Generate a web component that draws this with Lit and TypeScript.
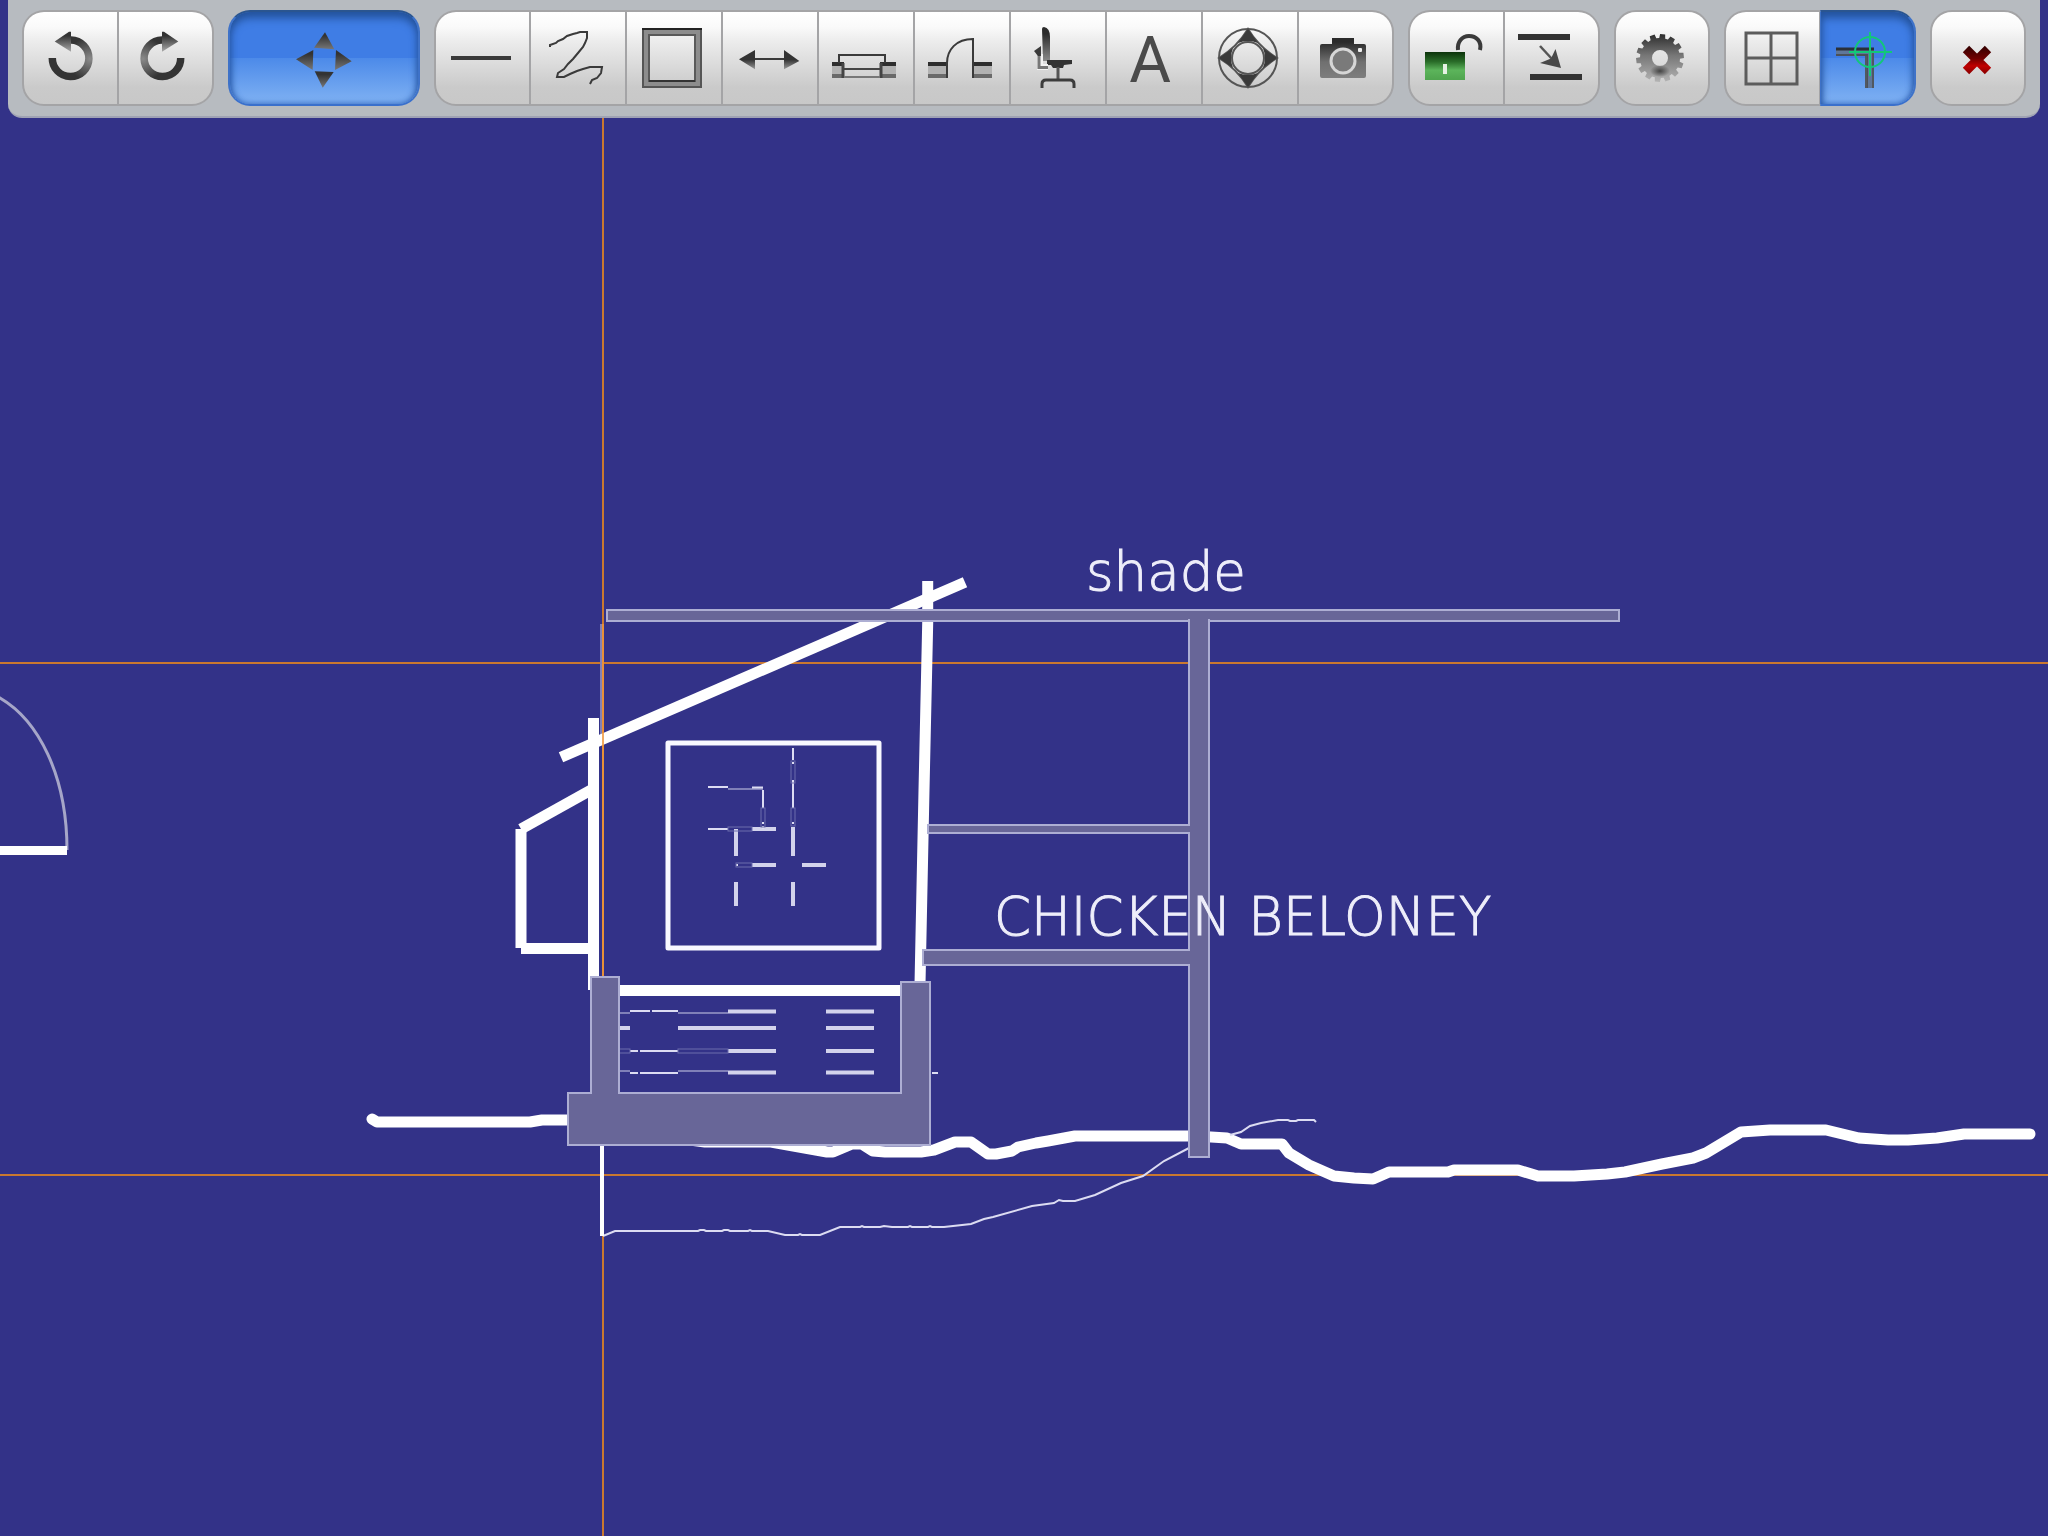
import { LitElement, html, css, svg, SVGTemplateResult } from "lit";
import { customElement, state } from "lit/decorators.js";
import { classMap } from "lit/directives/class-map.js";

interface Tool {
  id: string;
  label: string;
  icon: SVGTemplateResult;
  wide?: boolean;
}

const INK = "#3a3a3a";

/** Outline of a cog wheel centred on (cx, cy). */
function cog(cx: number, cy: number, teeth: number, outer: number, inner: number): string {
  const points: string[] = [];
  const step = (Math.PI * 2) / teeth;
  for (let i = 0; i < teeth; i++) {
    const a = i * step - Math.PI / 2 + step / 4;
    for (const [offset, r] of [[-0.34, inner], [-0.24, outer], [0.24, outer], [0.34, inner]]) {
      const t = a + offset * step;
      points.push(`${(cx + Math.cos(t) * r).toFixed(1)} ${(cy + Math.sin(t) * r).toFixed(1)}`);
    }
  }
  return `M${points.join("L")}Z`;
}

const turnArrow = (id: string) => svg`
  <defs>
    <radialGradient id=${id + "-ring"} gradientUnits="userSpaceOnUse" cx="67" cy="49" r="22">
      <stop offset="0" stop-color="#8a8a8a" /><stop offset="1" stop-color="#343434" />
    </radialGradient>
    <linearGradient id=${id + "-tip"} x1="0" y1="0" x2="0" y2="1">
      <stop offset="0.2" stop-color="#333" /><stop offset="1" stop-color="#aaa" />
    </linearGradient>
  </defs>
  <path d="M46 30H48A18.3 18.3 0 1 1 29.3 48" fill="none" stroke="url(#${id}-ring)" stroke-width="7.5" />
  <path d="M31.7 31.5L46 21.7H48V41.7Z" fill="url(#${id}-tip)" />`;

const block = (x: number, w: number) => svg`
  <rect x=${x} y="52" width=${w} height="16" fill="#b2b2b2" />
  <rect x=${x} y="52" width=${w} height="4" fill="#2e2e2e" />
  <rect x=${x} y="64" width=${w} height="4" fill="#6a6a6a" />`;

const ICONS: Record<string, SVGTemplateResult> = {
  undo: turnArrow("undo"),
  redo: svg`<g transform="translate(92 0) scale(-1 1)">${turnArrow("redo")}</g>`,
  move: svg`
    <defs><linearGradient id="mv" x1="0" y1="0" x2="0" y2="1">
      <stop offset="0.2" stop-color="#333" /><stop offset="1" stop-color="#777" />
    </linearGradient></defs>
    <g fill="url(#mv)">
      <path d="M49 22.3L38 37.7L58.3 39.3Z" />
      <path d="M60 40L75.7 51.3L59 60Z" />
      <path d="M37.3 40L20 49.3L36.7 60Z" />
      <path d="M38.7 61.3L57.7 62L46.7 77.7Z" />
    </g>`,
  line: svg`<rect x="16" y="46" width="60" height="4" fill=${INK} />`,
  sketch: svg`<path d="M20 37V35L26 33L28 31L33 29L37 26L43 24L47 23L50 22H57V28L55 33L53 37L48 43L43 49L38 54L34 59L28 63L27 67H34L40 64L47 61L53 59L60 57H72L71 63L67 68L62 70L60 74" fill="none" stroke=${INK} stroke-width="2" />`,
  room: svg`
    <path fill="#8d8d8d" fill-rule="evenodd" d="M16 18H76V78H16ZM23 25V71H69V25Z" />
    <rect x="17" y="19" width="58" height="58" fill="none" stroke="#555" stroke-width="2" />
    <rect x="23" y="25" width="46" height="46" fill="none" stroke="#5a5a5a" stroke-width="2" />
    <path d="M16 19H76" stroke="#222" stroke-width="2" />
    <path d="M23 71H69" stroke="#333" stroke-width="2" />`,
  measure: svg`
    <defs><linearGradient id="ms" x1="0" y1="0" x2="0" y2="1">
      <stop offset="0.5" stop-color="#333" /><stop offset="1" stop-color="#999" />
    </linearGradient></defs>
    <path d="M32 49H63" stroke=${INK} stroke-width="2" />
    <path d="M17 49.3L33 40V59.3ZM62 40V59.3L77.3 51Z" fill="url(#ms)" />`,
  window: svg`
    ${block(14, 12)}${block(62, 16)}
    <path d="M21 53V45H67V53" fill="none" stroke=${INK} stroke-width="2" />
    <path d="M25 53V68M63 53V68" stroke="#444" stroke-width="3" />
    <path d="M26 59H62" stroke="#444" stroke-width="2" />
    <path d="M26 67H62" stroke="#777" stroke-width="2" />`,
  door: svg`
    ${block(14, 20)}${block(58, 20)}
    <path d="M33 68V53C33 40 42 29 59 29V68" fill="none" stroke=${INK} stroke-width="2" />`,
  furniture: svg`
    <defs><linearGradient id="ch" x1="0" y1="0" x2="0" y2="1">
      <stop offset="0.2" stop-color="#2c2c2c" /><stop offset="1" stop-color="#8a8a8a" />
    </linearGradient></defs>
    <path d="M32 19Q32 17 34 17Q40 18 40 27V51H33Z" fill="url(#ch)" />
    <path d="M37 50H62V54L54 55L53 58H43L41 55H37Z" fill="#333" />
    <path d="M48 57V70" stroke="#555" stroke-width="3" />
    <path d="M32 78V74Q32 70 36 70H60Q64 70 64 74V78" fill="none" stroke="#3c3c3c" stroke-width="3" />
    <path d="M30 44V57H38" fill="none" stroke="#f2f2f2" stroke-width="6" />
    <path d="M29 44V57.500H38" fill="none" stroke="#777" stroke-width="3" />
    <path d="M24 41L31 36V46H28Z" fill="#3a3a3a" />`,
  text: svg`<text class="glyph" x="44" y="72" text-anchor="middle">A</text>`,
  orbit: svg`
    <g fill="none" stroke="#555" stroke-width="2">
      <circle cx="46" cy="48" r="29" /><circle cx="46" cy="48" r="16" />
      <path d="M46 19Q57 37 75 48Q57 59 46 77Q35 59 17 48Q35 37 46 19Z" />
    </g>
    <g fill=${INK}>
      <path d="M46 19L56 33Q46 29 36 33Z" /><path d="M46 77L56 63Q46 67 36 63Z" />
      <path d="M17 48L31 38Q27 48 31 58Z" /><path d="M75 48L61 38Q65 48 61 58Z" />
    </g>`,
  camera: svg`
    <defs><linearGradient id="cam" x1="0" y1="0" x2="0" y2="1">
      <stop offset="0.1" stop-color="#2a2a2a" /><stop offset="0.6" stop-color="#707070" /><stop offset="1" stop-color="#7e7e7e" />
    </linearGradient></defs>
    <path d="M34 28H56V34H66Q68 34 68 36V66Q68 68 66 68H24Q22 68 22 66V36Q22 34 24 34H34Z" fill="url(#cam)" />
    <circle cx="45" cy="51" r="12" fill="#7a7a7a" stroke="#d6d6d6" stroke-width="3" />
    <rect x="60" y="38" width="4" height="4" rx="1" fill="#eee" />`,
  lock: svg`
    <defs><linearGradient id="lk" x1="0" y1="0" x2="0" y2="1">
      <stop offset="0" stop-color="#0c330b" /><stop offset="0.35" stop-color="#2a6d29" /><stop offset="0.65" stop-color="#5cb45b" /><stop offset="1" stop-color="#4fa44e" />
    </linearGradient></defs>
    <path d="M49 40C48 32 53 26 60 26S73 31 71 40" fill="none" stroke=${INK} stroke-width="4" />
    <rect x="16" y="42" width="40" height="28" fill="url(#lk)" />
    <rect x="34" y="54" width="4" height="10" fill="#e6f2e4" />`,
  align: svg`
    <rect x="14" y="24" width="52" height="6" fill="#333" /><rect x="26" y="64" width="52" height="6" fill="#333" />
    <path d="M36 36L48 49" stroke="#555" stroke-width="2.500" />
    <path d="M57 58L51.500 39L47 48.500L36 53Z" fill="#484848" />`,
  settings: svg`
    <defs>
      <linearGradient id="gr" x1="0" y1="0" x2="0" y2="1">
        <stop offset="0" stop-color="#2c2c2c" /><stop offset="0.45" stop-color="#777" /><stop offset="1" stop-color="#b4b4b4" />
      </linearGradient>
      <radialGradient id="gs"><stop offset="0.1" stop-color="#4c4c4c" /><stop offset="1" stop-color="#4c4c4c" stop-opacity="0" /></radialGradient>
    </defs>
    <path d=${cog(46, 48, 14, 24, 20) + "M54 48A8 8 0 1 0 38 48A8 8 0 1 0 54 48Z"} fill="url(#gr)" fill-rule="evenodd" />
    <ellipse cx="46" cy="61" rx="10" ry="6" fill="url(#gs)" />`,
  grid: svg`<path d="M21 23H72V74H21ZM46 23V74M21 48H72" fill="none" stroke="#5c5c5c" stroke-width="3" />`,
  snap: svg`
    <path d="M16 39H53V78M16 45H47V78" fill="none" stroke="#4b5158" stroke-width="2" />
    <path d="M16 42H50V78" fill="none" stroke="#5f7699" stroke-width="4" />
    <path d="M16 39H54" stroke="#2b3038" stroke-width="3" />
    <path d="M46 46V78M53 40V78" stroke="#525860" stroke-width="2" />
    <g fill="none" stroke="#12c878" stroke-width="2">
      <circle cx="50" cy="42" r="15" /><path d="M29 42H72M50 22V66" />
    </g>`,
  close: svg`
    <defs><linearGradient id="cl" gradientUnits="userSpaceOnUse" x1="0" y1="35" x2="0" y2="65">
      <stop offset="0" stop-color="#2c0000" /><stop offset="0.45" stop-color="#700000" /><stop offset="0.7" stop-color="#c00000" /><stop offset="1" stop-color="#800000" />
    </linearGradient></defs>
    <path d="M36 39L58 61M58 39L36 61" stroke="url(#cl)" stroke-width="9" />`,
};

const GROUPS: Tool[][] = [
  [
    { id: "undo", label: "Undo", icon: ICONS.undo },
    { id: "redo", label: "Redo", icon: ICONS.redo },
  ],
  [{ id: "move", label: "Move", icon: ICONS.move, wide: true }],
  [
    { id: "line", label: "Line", icon: ICONS.line },
    { id: "sketch", label: "Freehand", icon: ICONS.sketch },
    { id: "room", label: "Room", icon: ICONS.room },
    { id: "measure", label: "Dimension", icon: ICONS.measure },
    { id: "window", label: "Window", icon: ICONS.window },
    { id: "door", label: "Door", icon: ICONS.door },
    { id: "furniture", label: "Furniture", icon: ICONS.furniture },
    { id: "text", label: "Text", icon: ICONS.text },
    { id: "orbit", label: "Pan", icon: ICONS.orbit },
    { id: "camera", label: "Photo", icon: ICONS.camera },
  ],
  [
    { id: "lock", label: "Unlock", icon: ICONS.lock },
    { id: "align", label: "Offset", icon: ICONS.align },
  ],
  [{ id: "settings", label: "Settings", icon: ICONS.settings }],
  [
    { id: "grid", label: "Grid", icon: ICONS.grid },
    { id: "snap", label: "Snap", icon: ICONS.snap },
  ],
  [{ id: "close", label: "Close", icon: ICONS.close }],
];

@customElement("tool-bar")
export class ToolBar extends LitElement {
  @state() private active = new Set(["move", "snap"]);

  static styles = css`
    :host {
      display: flex;
      gap: 14px;
      box-sizing: border-box;
      margin: 0 8px;
      padding: 10px 14px;
      background: #b7bbc0;
      border-bottom: 2px solid #9fa2b4;
      border-radius: 0 0 14px 14px;
    }
    .group {
      display: grid;
      grid-auto-flow: column;
      grid-auto-columns: minmax(0, 1fr);
      min-width: 0;
      flex: 1 1 0;
    }
    .g2 { flex-grow: 2; }
    .g10 { flex-grow: 10; }
    .tool {
      display: flex;
      justify-content: center;
      align-items: center;
      box-sizing: border-box;
      min-width: 0;
      height: 96px;
      margin: 0;
      padding: 0;
      border: 1px solid #a4a4a6;
      border-width: 2px 1px;
      background: linear-gradient(#fff, #fafafa 16%, #ececec 32%, #cacaca 82%, #c8c8c8);
      cursor: pointer;
    }
    .tool:first-child { border-left-width: 2px; border-top-left-radius: 22px; border-bottom-left-radius: 22px; }
    .tool:last-child { border-right-width: 2px; border-top-right-radius: 22px; border-bottom-right-radius: 22px; }
    .active {
      border-color: #2a5590 #3e72c8 #3a70cc;
      background: linear-gradient(#3f7de5 0 50%, #4c8ae9 50%, #80b2f3);
      box-shadow: inset 0 6px 8px #24539c, inset 0 0 6px #2f64bd;
    }
    .icon { flex: none; width: 96px; height: 96px; display: block; }
    .glyph { font: 64px Roboto, "Liberation Sans", sans-serif; fill: #4a4a4a; }
  `;

  private toggle(id: string) {
    const next = new Set(this.active);
    next.has(id) ? next.delete(id) : next.add(id);
    this.active = next;
  }

  render() {
    return GROUPS.map((group) => {
      const units = group.reduce((n, t) => n + (t.wide ? 2 : 1), 0);
      return html`<div class=${classMap({ group: true, g2: units === 2, g10: units === 10 })}>
        ${group.map(
          (t) => html`<button
            type="button"
            class=${classMap({ tool: true, active: this.active.has(t.id) })}
            aria-label=${t.label}
            aria-pressed=${this.active.has(t.id)}
            @click=${() => this.toggle(t.id)}
          ><svg class="icon" viewBox="0 0 96 96" aria-hidden="true">${t.icon}</svg></button>`
        )}
      </div>`;
    });
  }
}

/** Strokes of the plan details: [x1, y1, x2, y2]. */
const THICK = [
  [793, 827, 793, 856], [793, 882, 793, 906], [736, 829, 736, 856], [736, 882, 736, 906],
  [752, 829, 776, 829], [752, 865, 776, 865], [802, 865, 826, 865],
  [728, 1011.5, 776, 1011.5], [826, 1011.5, 874, 1011.5],
  [619, 1028, 630, 1028], [678, 1028, 776, 1028], [826, 1028, 874, 1028],
  [728, 1051, 776, 1051], [826, 1051, 874, 1051],
  [728, 1072.5, 776, 1072.5], [826, 1072.5, 874, 1072.5],
];
const THIN = [
  [793, 748, 793, 760], [793, 780, 793, 808], [793, 762, 793, 764], [793, 822, 793, 824],
  [708, 787, 728, 787], [752, 787.5, 763, 787.5], [763, 790, 763, 808], [763, 822, 763, 824], [763, 826, 763, 829],
  [708, 829, 728, 829], [736, 865, 738, 865],
  [630, 1011, 650, 1011], [652, 1011, 678, 1011],
  [630, 1051, 638, 1051], [640, 1051, 678, 1051],
  [630, 1073, 638, 1073], [640, 1073, 678, 1073], [932, 1073, 938, 1073],
];
const FAINT = [
  [728, 789, 763, 789], [619, 1013, 630, 1013], [678, 1013, 728, 1013],
  [619, 1071, 630, 1071], [678, 1071, 728, 1071],
];
/** Hollow openings: [x, y, width, height]. */
const HOLLOW = [
  [791, 761, 4, 22], [791, 808, 4, 18], [761, 808, 4, 19], [728, 827, 24, 4], [736, 863, 16, 4],
  [615, 1049, 15, 4], [678, 1049, 50, 4],
];
const seg = (rows: number[][]) => rows.map(([a, b, c, d]) => `M${a} ${b}L${c} ${d}`).join("");

@customElement("plan-canvas")
export class PlanCanvas extends LitElement {
  static styles = css`
    :host { display: block; overflow: hidden; background: #333288; }
    .plan { display: block; width: 100%; height: 100%; }
    .guide { stroke: #ca7830; stroke-width: 2; fill: none; }
    .guide-top { stroke: #f0963a; stroke-width: 2; fill: none; }
    .stroke { stroke: #fff; stroke-width: 11; fill: none; }
    .ground { stroke: #fff; stroke-width: 11; stroke-linejoin: round; stroke-linecap: round; fill: none; }
    .pane { stroke: #f8f8ff; stroke-width: 5; fill: none; stroke-linejoin: round; }
    .thick { stroke: #d3d3ec; stroke-width: 4; fill: none; }
    .thin { stroke: #dcdcf2; stroke-width: 2; fill: none; }
    .faint { stroke: #8080b8; stroke-width: 2; fill: none; }
    .hollow { stroke: #6c6cac; stroke-width: 1; fill: none; }
    .wall { fill: #686698; stroke: #adaed3; stroke-width: 2; }
    .core { fill: #686698; }
    .note {
      font: 200 53px "DejaVu Sans", "DejaVu Sans Light", sans-serif;
      fill: #eeeefa;
      stroke: #eeeefa;
      stroke-width: 1;
    }
  `;

  render() {
    return html`<svg class="plan" viewBox="0 0 2048 1536" preserveAspectRatio="xMinYMin slice" role="img" aria-label="Section drawing">
      <path class="guide" d="M0 663H2048M0 1175H2048M603 0V1536" />

      <path d="M-8 694L0 698C38 720 67 775 67 850" fill="none" stroke="#a6a6c8" stroke-width="3" />
      <rect x="0" y="846" width="67" height="9" fill="#fff" />

      <path class="faint" d="M601 624V735" />
      <path class="stroke" d="M561 757.300L965 582.300" />
      <path class="stroke" d="M593.500 718V990" />
      <path class="stroke" d="M591 790L521 829" />
      <path class="stroke" d="M521 829V948M521 948.500H594" />
      <path class="stroke" d="M927.700 581V623L924 790L920 984" />
      <path class="guide-top" d="M603 624V976" stroke-opacity="0.8" />
      <path class="stroke" d="M619 990.500H901" />

      <path class="ground" d="M372 1119L377 1122H530L542 1120H572" />
      <path class="ground" d="M690 1140L705 1142H771L827 1152H833L852 1144H862L873 1151L885 1152H921L934 1150L955 1142H971L988 1154H996L1012 1151L1018 1147L1036 1143L1048 1141L1075 1136H1188L1211 1137L1227 1138L1241 1144H1282L1289 1153L1309 1165L1334 1176L1354 1178L1373 1179L1389 1172H1448L1454 1170H1518L1538 1176H1574L1607 1174L1625 1172L1662 1164L1693 1158L1706 1153L1741 1132L1770 1130H1826L1859 1138L1888 1140L1908 1140L1937 1138L1964 1134H2030" />

      <path class="thin" d="M603 1236L615 1231H698L700 1230H704L706 1231H722L724 1230H728L730 1231H748L750 1230L752 1231H768L785 1235H798L800 1234L802 1235H820L840 1227H860L862 1226L864 1227H880L884 1226L892 1227H908L910 1226L912 1227H928L930 1226L932 1227H944L971 1224L984 1219L993 1217L1032 1206L1054 1203L1059 1200L1063 1201H1075L1095 1195L1121 1183L1143 1176L1164 1161L1189 1148" />
      <path class="thin" d="M1230 1135L1241 1132L1250 1126L1261 1123L1278 1120H1288L1290 1121H1296L1298 1120H1314L1316 1122" />
      <path d="M602 1145V1236" stroke="#fff" stroke-width="4" />

      <rect class="pane" x="668" y="743" width="211" height="205" />
      <path class="thick" d=${seg(THICK)} />
      <path class="faint" d=${seg(FAINT)} />
      <path class="thin" d=${seg(THIN)} />
      ${HOLLOW.map(([x, y, w, h]) => svg`<rect class="hollow" x=${x} y=${y} width=${w} height=${h} />`)}

      <path class="wall" d="M591 977H619V1093H901V982H930V1145H568V1093H591Z" />
      <rect class="wall" x="607" y="610" width="1012" height="11" />
      <rect class="wall" x="1189" y="620" width="20" height="537" />
      <path class="wall" d="M1189 825H928V833H1189" />
      <path class="wall" d="M1189 950H923V965H1189" />
      <path class="core" d="M1190 616H1208V630H1190ZM1186 826H1200V832H1186ZM1186 951H1200V964H1186Z" />

      <text class="note" x="1086" y="590">shade</text>
      <text class="note" x="994" y="935">CHICKEN BELONEY</text>
    </svg>`;
  }
}

@customElement("app-root")
export class AppRoot extends LitElement {
  static styles = css`
    :host { display: grid; grid-template-columns: minmax(0, 1fr); height: 100vh; background: #333288; }
    .layer { grid-area: 1 / 1; min-height: 0; }
    .top { align-self: start; }
  `;

  render() {
    return html`
      <plan-canvas class="layer"></plan-canvas>
      <tool-bar class="layer top" role="toolbar" aria-label="Drawing tools"></tool-bar>
    `;
  }
}
